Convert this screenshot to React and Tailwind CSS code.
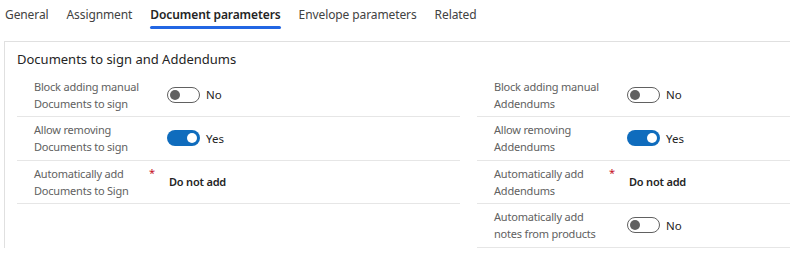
import React from "react";

const font = { fontFamily: '"Noto Sans", "Open Sans", sans-serif' };

const tabs = ["General", "Assignment", "Document parameters", "Envelope parameters", "Related"];

const Toggle = ({ on }) => (
  <div className="flex items-center">
    <span
      className={
        on
          ? "flex h-[16px] w-[33px] items-center justify-end rounded-full bg-[#0f6cbd] px-[3px]"
          : "flex h-[16px] w-[33px] items-center justify-start rounded-full border border-[#616161] bg-white px-[2px]"
      }
    >
      <span className={on ? "h-[10px] w-[10px] rounded-full bg-white" : "h-[10px] w-[10px] rounded-full bg-[#616161]"} />
    </span>
    <span className="ml-[6px] text-[11.5px] text-[#242424]">{on ? "Yes" : "No"}</span>
  </div>
);

const Row = ({ label, required, children }) => (
  <div className="flex h-[43.5px] items-center border-b border-[#e6e6e6] pl-[17px]">
    <div className="relative w-[133px] shrink-0 text-[11px] leading-[17px] tracking-[-0.2px] text-[#616161]">
      {label[0]}
      <br />
      {label[1]}
      {required && <span className="absolute left-[115px] top-[-1px] text-[11px] text-[#c50f1f]">*</span>}
    </div>
    {children}
  </div>
);

const Value = ({ children }) => (
  <span className="pl-[2px] text-[11px] font-semibold tracking-[-0.2px] text-[#242424]">{children}</span>
);

export default function App() {
  return (
    <div className="h-[257px] w-[790px] overflow-hidden bg-white" style={font}>
      {/* Tabs */}
      <div className="flex h-[41px] items-start pl-[5px] pt-[5px]">
        {tabs.map((t) => (
          <div key={t} className="mr-[18px] flex flex-col items-stretch">
            <span
              className={
                t === "Document parameters"
                  ? "text-[12px] leading-[20px] font-semibold tracking-[-0.1px] text-[#242424]"
                  : "text-[12px] leading-[20px] tracking-[-0.1px] text-[#424242]"
              }
            >
              {t}
            </span>
            {t === "Document parameters" && <span className="mt-[1px] h-[3px] rounded-full bg-[#2266e3]" />}
          </div>
        ))}
      </div>

      {/* Panel */}
      <div className="ml-[4px] w-[927px] border-l border-t border-[#e0e0e0] px-[12px] pt-[7px]">
        <div className="h-[20px] text-[13px] leading-[20px] text-[#242424]">Documents to sign and Addendums</div>
        <div className="mt-[4.5px] grid grid-cols-[443px_443px] gap-x-[17px]">
          <div>
            <Row label={["Block adding manual", "Documents to sign"]}>
              <Toggle on={false} />
            </Row>
            <Row label={["Allow removing", "Documents to sign"]}>
              <Toggle on />
            </Row>
            <Row label={["Automatically add", "Documents to Sign"]} required>
              <Value>Do not add</Value>
            </Row>
          </div>
          <div>
            <Row label={["Block adding manual", "Addendums"]}>
              <Toggle on={false} />
            </Row>
            <Row label={["Allow removing", "Addendums"]}>
              <Toggle on />
            </Row>
            <Row label={["Automatically add", "Addendums"]} required>
              <Value>Do not add</Value>
            </Row>
            <Row label={["Automatically add", "notes from products"]}>
              <Toggle on={false} />
            </Row>
          </div>
        </div>
      </div>
    </div>
  );
}
